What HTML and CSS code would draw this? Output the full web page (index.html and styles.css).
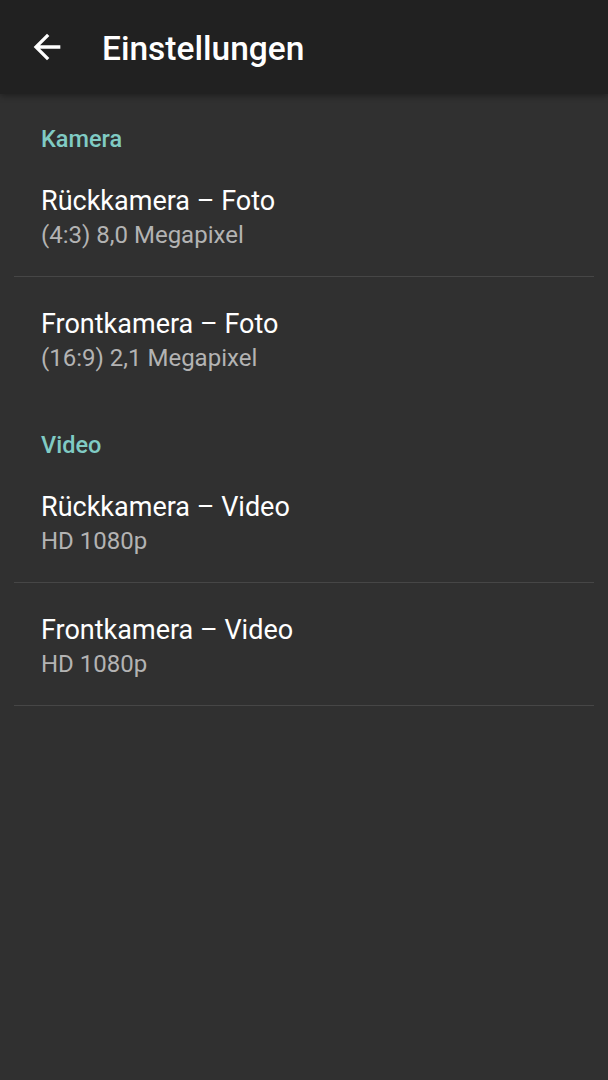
FILE: index.html
```html
<!DOCTYPE html>
<html lang="de">
<head>
<meta charset="utf-8">
<link rel="stylesheet" href="styles.css">
</head>
<body>
<header class="toolbar">
  <svg class="back" viewBox="0 0 24 24"><path d="M20 11H7.83l5.59-5.59L12 4l-8 8 8 8 1.41-1.41L7.83 13H20v-2z" fill="#fff"/></svg>
  <h1 class="title">Einstellungen</h1>
</header>
<main class="list">
  <div class="category">Kamera</div>
  <div class="item divided">
    <div class="item-title">Rückkamera – Foto</div>
    <div class="item-summary">(4:3) 8,0 Megapixel</div>
  </div>
  <div class="item">
    <div class="item-title">Frontkamera – Foto</div>
    <div class="item-summary">(16:9) 2,1 Megapixel</div>
  </div>
  <div class="category">Video</div>
  <div class="item divided">
    <div class="item-title">Rückkamera – Video</div>
    <div class="item-summary">HD 1080p</div>
  </div>
  <div class="item divided">
    <div class="item-title">Frontkamera – Video</div>
    <div class="item-summary">HD 1080p</div>
  </div>
</main>
</body>
</html>
```
FILE: styles.css
```css
html, body {
  margin: 0;
  padding: 0;
  background: #303030;
  font-family: Roboto, "Noto Sans", sans-serif;
  height: 100%;
}
.toolbar {
  height: 94px;
  background: #212121;
  display: flex;
  align-items: center;
  box-shadow: 0 2px 6px rgba(0,0,0,0.35);
  position: relative;
}
.back {
  margin: 0 0 0 27px;
  width: 40px;
  height: 40px;
}
.title {
  margin: 4px 0 0 35px;
  color: #fff;
  font-size: 33.5px;
  font-weight: 500;
  line-height: 40px;
}
.list {
  padding: 0 14px;
}
.category {
  height: 60px;
  box-sizing: border-box;
  padding: 31px 0 0 27px;
  line-height: 28px;
  font-size: 23.5px;
  font-weight: 500;
  color: #80cbc4;
}
.item {
  height: 123px;
  box-sizing: border-box;
  padding: 31px 0 0 27px;
}
.item.divided {
  border-bottom: 1px solid #464646;
}
.item-title {
  color: #fff;
  font-size: 27px;
  line-height: 32px;
}
.item-summary {
  color: #b3b3b3;
  font-size: 24px;
  line-height: 36px;
}
```
